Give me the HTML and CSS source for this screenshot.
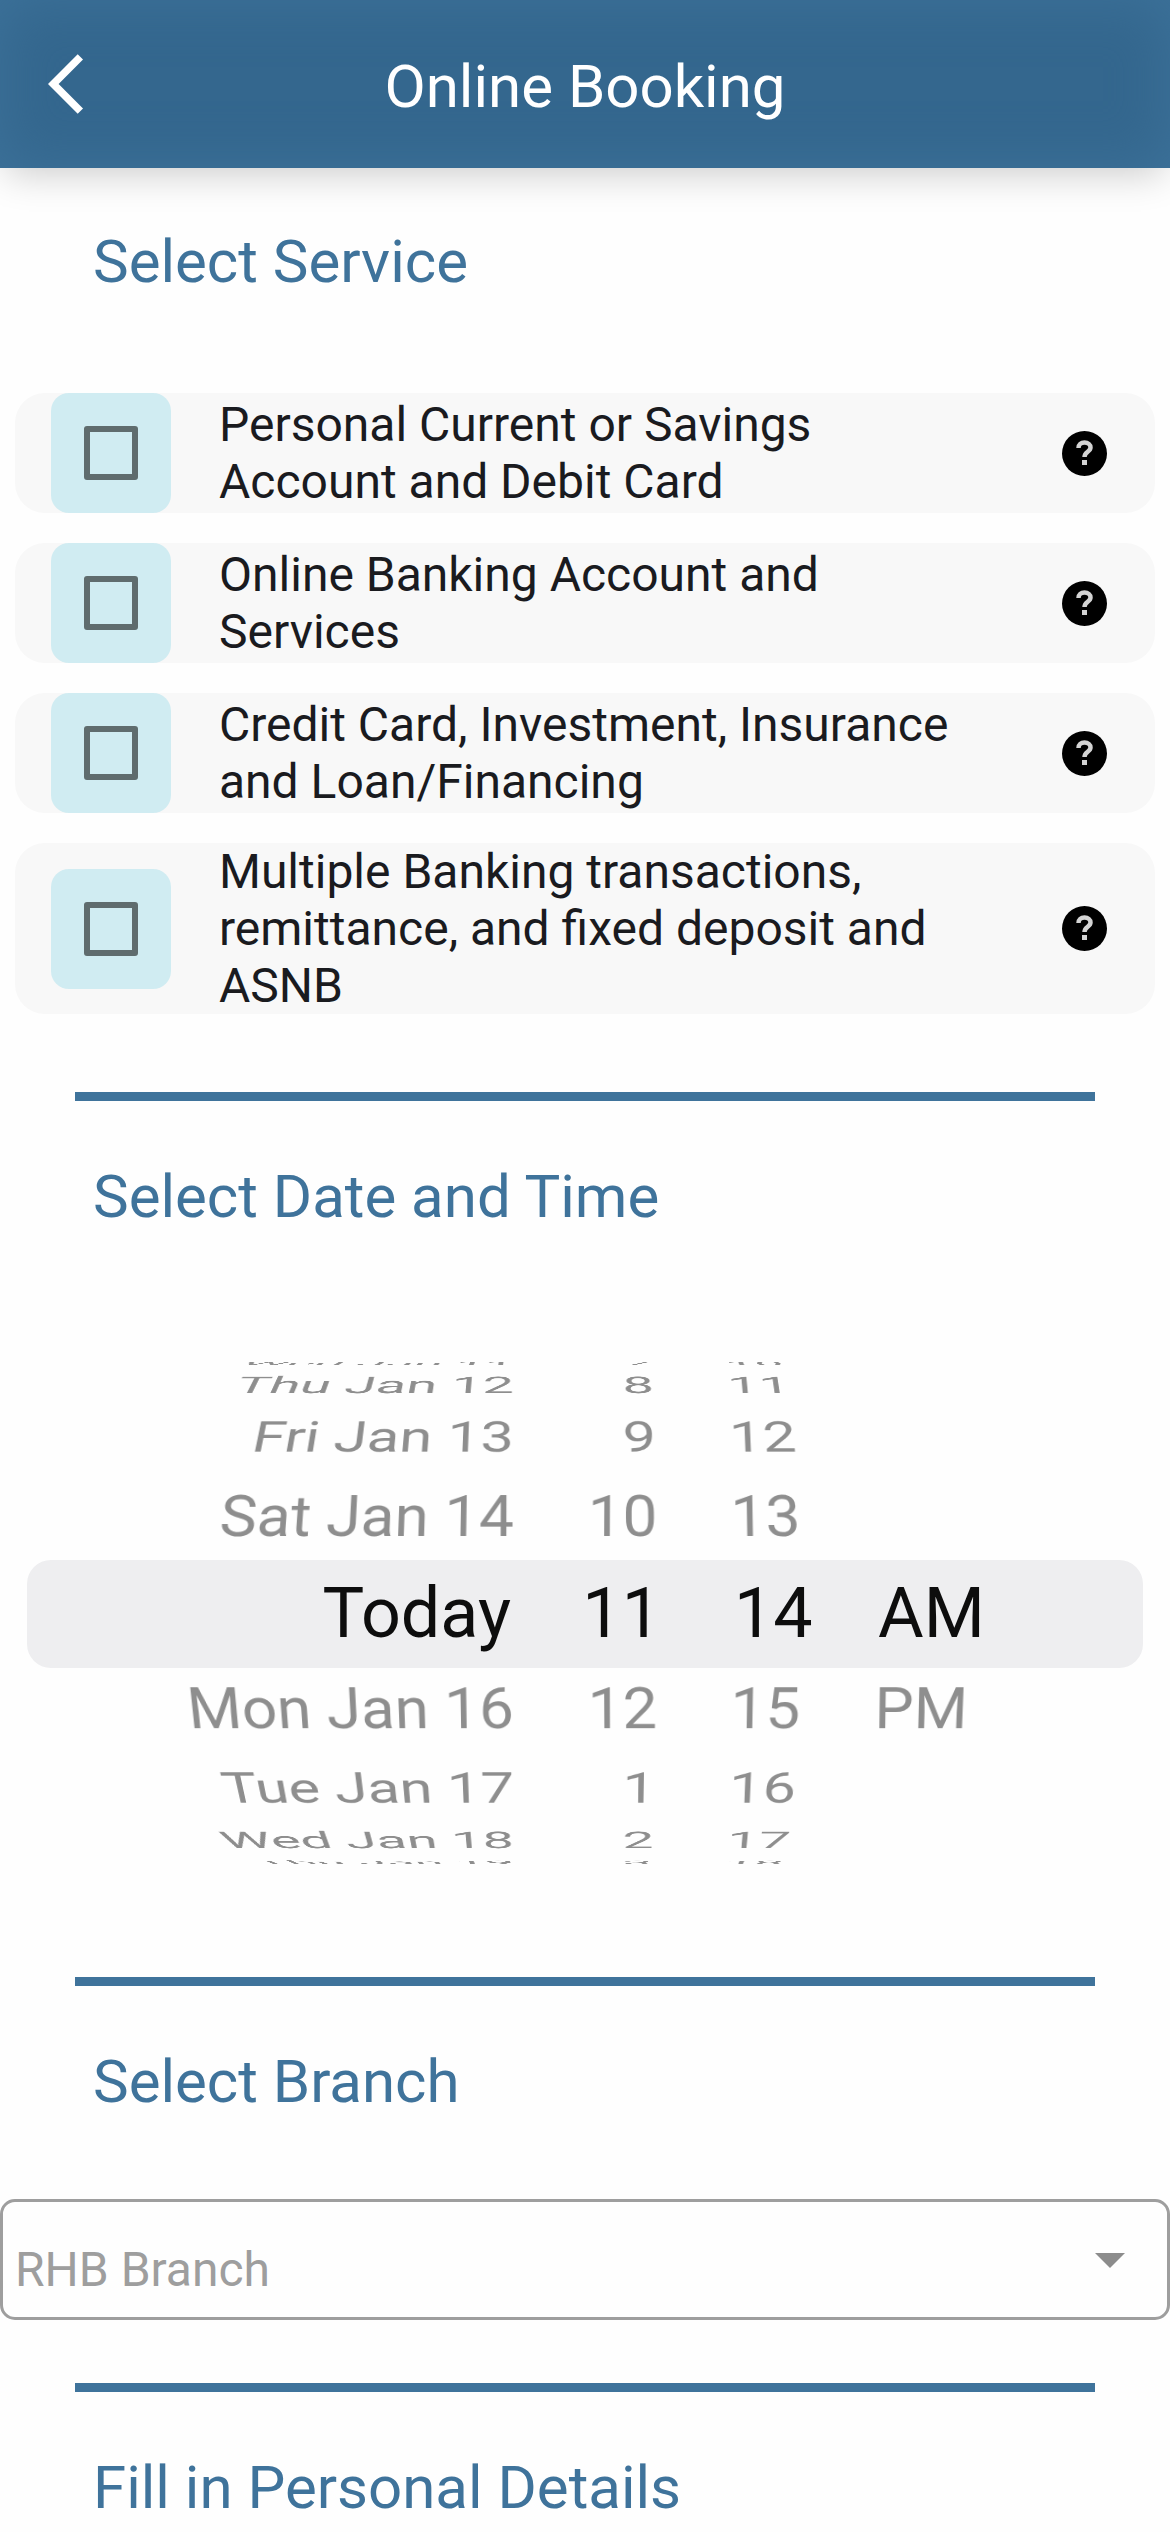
FILE: index.html
```html
<!DOCTYPE html>
<html lang="en">
<head>
<meta charset="utf-8">
<meta name="viewport" content="width=device-width, initial-scale=1">
<title>Online Booking</title>
<link rel="stylesheet" href="styles.css">
</head>
<body>
<svg class="sprite" aria-hidden="true">
  <symbol id="help" viewBox="0 0 45 45">
    <circle cx="22.5" cy="22.5" r="22.5" fill="#000"/>
    <path d="M16.5 17c0-3.600 2.500-5.500 6-5.500s6 2 6 5c0 4.500-6 4-6 9.500" fill="none" stroke="#d4d4d4" stroke-width="4.500"/>
    <rect x="20" y="29" width="5" height="5" fill="#d4d4d4"/>
  </symbol>
</svg>
<header class="app-bar">
  <button class="back" type="button" aria-label="Back">
    <svg viewBox="0 0 24 24" aria-hidden="true"><path fill="#fff" d="M11.67 3.87 9.9 2.1 0 12l9.900 9.900 1.770-1.770L3.540 12z"/></svg>
  </button>
  <h1 class="title">Online Booking</h1>
</header>
<main>
  <section class="section">
    <h2 class="heading">Select Service</h2>
    <ul class="services">
      <li class="service">
        <span class="tick"><input class="box" type="checkbox" id="s1"></span>
        <label class="name" for="s1">Personal Current or Savings Account and Debit Card</label>
        <button class="help" type="button" aria-label="Help"><svg aria-hidden="true"><use href="#help"/></svg></button>
      </li>
      <li class="service">
        <span class="tick"><input class="box" type="checkbox" id="s2"></span>
        <label class="name" for="s2">Online Banking Account and Services</label>
        <button class="help" type="button" aria-label="Help"><svg aria-hidden="true"><use href="#help"/></svg></button>
      </li>
      <li class="service">
        <span class="tick"><input class="box" type="checkbox" id="s3"></span>
        <label class="name" for="s3">Credit Card, Investment, Insurance and Loan/Financing</label>
        <button class="help" type="button" aria-label="Help"><svg aria-hidden="true"><use href="#help"/></svg></button>
      </li>
      <li class="service">
        <span class="tick"><input class="box" type="checkbox" id="s4"></span>
        <label class="name" for="s4">Multiple Banking transactions, remittance, and fixed deposit and ASNB</label>
        <button class="help" type="button" aria-label="Help"><svg aria-hidden="true"><use href="#help"/></svg></button>
      </li>
    </ul>
  </section>
  <section class="section">
    <h2 class="heading">Select Date and Time</h2>
    <div class="picker">
      <div class="band"></div>
      <div class="wheels">
        <ul class="wheel wheel-date" role="listbox" aria-label="Date">
          <li class="item up-4" role="option">Wed Jan 11</li>
          <li class="item up-3" role="option">Thu Jan 12</li>
          <li class="item up-2" role="option">Fri Jan 13</li>
          <li class="item up-1" role="option">Sat Jan 14</li>
          <li class="item current" role="option" aria-selected="true">Today</li>
          <li class="item down-1" role="option">Mon Jan 16</li>
          <li class="item down-2" role="option">Tue Jan 17</li>
          <li class="item down-3" role="option">Wed Jan 18</li>
          <li class="item down-4" role="option">Thu Jan 19</li>
        </ul>
        <ul class="wheel wheel-hour" role="listbox" aria-label="Hour">
          <li class="item up-4" role="option">7</li>
          <li class="item up-3" role="option">8</li>
          <li class="item up-2" role="option">9</li>
          <li class="item up-1" role="option">10</li>
          <li class="item current" role="option" aria-selected="true">11</li>
          <li class="item down-1" role="option">12</li>
          <li class="item down-2" role="option">1</li>
          <li class="item down-3" role="option">2</li>
          <li class="item down-4" role="option">3</li>
        </ul>
        <ul class="wheel wheel-minute" role="listbox" aria-label="Minute">
          <li class="item up-4" role="option">10</li>
          <li class="item up-3" role="option">11</li>
          <li class="item up-2" role="option">12</li>
          <li class="item up-1" role="option">13</li>
          <li class="item current" role="option" aria-selected="true">14</li>
          <li class="item down-1" role="option">15</li>
          <li class="item down-2" role="option">16</li>
          <li class="item down-3" role="option">17</li>
          <li class="item down-4" role="option">18</li>
        </ul>
        <ul class="wheel wheel-period" role="listbox" aria-label="AM or PM">
          <li class="item current" role="option" aria-selected="true">AM</li>
          <li class="item down-1" role="option">PM</li>
        </ul>
      </div>
    </div>
  </section>
  <section class="section">
    <h2 class="heading">Select Branch</h2>
    <div class="field">
      <select class="branch" aria-label="Branch">
        <option>RHB Branch</option>
      </select>
      <svg class="caret" viewBox="0 0 30 15" aria-hidden="true"><path d="M0 0h30L15 15z" fill="#8c8c8c"/></svg>
    </div>
  </section>
  <section class="section">
    <h2 class="heading">Fill in Personal Details</h2>
  </section>
</main>
</body>
</html>
```

FILE: styles.css
```css
:root {
  --blue: #3f739b;
  --radius-wheel: 321px;
  --step: 17.72deg;
}

* {
  box-sizing: border-box;
}

body {
  margin: 0;
  background: #fefefe;
  color: #1a1b1f;
  font-family: Roboto, "Liberation Sans", sans-serif;
  font-size: 48px;
  line-height: 57px;
}

ul {
  margin: 0;
  padding: 0;
  list-style: none;
}

button {
  padding: 0;
  border: 0;
  background: none;
}

.sprite {
  display: none;
}

/* App bar */

.app-bar {
  display: grid;
  grid-template-columns: 72px 1fr 72px;
  align-items: center;
  height: 168px;
  padding: 0 48px;
  background: #34678e;
  box-shadow:
    inset 0 0 56px #3d729a,
    0 12px 36px -6px rgba(0, 0, 0, 0.2);
}

.back,
.back svg {
  display: block;
  width: 72px;
  height: 72px;
}

.title {
  margin: 0;
  padding-top: 6px;
  color: #fff;
  font-size: 60px;
  font-weight: 400;
  line-height: 70px;
  text-align: center;
}

/* Sections */

.section {
  padding-top: 59px;
}

.section + .section::before {
  content: "";
  display: block;
  height: 9px;
  margin: 0 75px 61px;
  background: var(--blue);
}

.section + .section {
  padding-top: 63px;
}

.heading {
  margin: 0 93px;
  color: var(--blue);
  font-size: 60px;
  font-weight: 400;
  line-height: 70px;
}

.heading:not(:last-child) {
  margin-bottom: 82px;
}

/* Services */

.services {
  display: grid;
  gap: 30px;
  padding: 14px 15px 15px;
}

.service {
  display: flex;
  align-items: center;
  padding: 0 48px 0 36px;
  border-radius: 30px;
  background: #f8f8f8;
}

.tick {
  display: grid;
  flex: none;
  place-items: center;
  width: 120px;
  height: 120px;
  border-radius: 18px;
  background: #d0ecf2;
}

.box {
  appearance: none;
  width: 54px;
  height: 54px;
  margin: 0;
  border: 6px solid #5f6c6e;
  border-radius: 3px;
}

.box:checked {
  background: #5f6c6e;
}

.name {
  flex: 1;
  padding: 0 96px 0 48px;
}

.help,
.help svg {
  display: block;
  flex: none;
  width: 45px;
  height: 45px;
}

/* Date and time wheels */

.picker {
  display: grid;
  align-items: center;
  height: 600px;
}

.band,
.wheels {
  grid-area: 1 / 1;
}

.band {
  height: 108px;
  margin: 0 27px;
  border-radius: 24px;
  background: #eeeef0;
}

.wheels {
  display: grid;
  grid-template-columns: 514fr 184fr 144fr 328fr;
  height: 502px;
  margin-bottom: 2px;
  overflow: hidden;
}

.wheel {
  display: grid;
  align-items: center;
  perspective: 1000px;
}

.wheel-date {
  perspective-origin: 100% 50%;
  text-align: right;
}

.wheel-hour {
  padding-right: 40px;
  perspective-origin: 59% 50%;
  text-align: right;
}

.wheel-minute,
.wheel-period {
  padding-left: 33px;
  perspective-origin: 0 50%;
}

.item {
  grid-area: 1 / 1;
  color: #8e8e8e;
  font-size: 63px;
  line-height: 76px;
  white-space: nowrap;
  transform: translateZ(calc(-1 * var(--radius-wheel))) rotateX(var(--turn, 0deg)) translateZ(var(--radius-wheel));
}

.current {
  color: #0d0d0d;
  font-size: 70px;
  transform: none;
}

.wheel-date .current {
  padding-right: 3px;
}

.wheel-hour .current {
  margin-right: -3px;
}

.wheel-minute .current,
.wheel-period .current {
  padding-left: 3px;
}

.up-1 { --turn: calc(1 * var(--step)); }
.up-2 { --turn: calc(2 * var(--step)); }
.up-3 { --turn: calc(3 * var(--step)); }
.up-4 { --turn: calc(4 * var(--step)); }
.down-1 { --turn: calc(-1 * var(--step)); }
.down-2 { --turn: calc(-2 * var(--step)); }
.down-3 { --turn: calc(-3 * var(--step)); }
.down-4 { --turn: calc(-4 * var(--step)); }

/* Branch */

.field {
  display: grid;
  align-items: center;
}

.branch,
.caret {
  grid-area: 1 / 1;
}

.branch {
  appearance: none;
  width: 100%;
  height: 121px;
  padding: 20px 96px 0 12px;
  border: 3px solid #9e9e9e;
  border-radius: 15px;
  background: transparent;
  color: #9e9e9e;
  font: inherit;
}

.caret {
  justify-self: end;
  width: 30px;
  height: 15px;
  margin: 2px 45px 0 0;
  pointer-events: none;
}
```
